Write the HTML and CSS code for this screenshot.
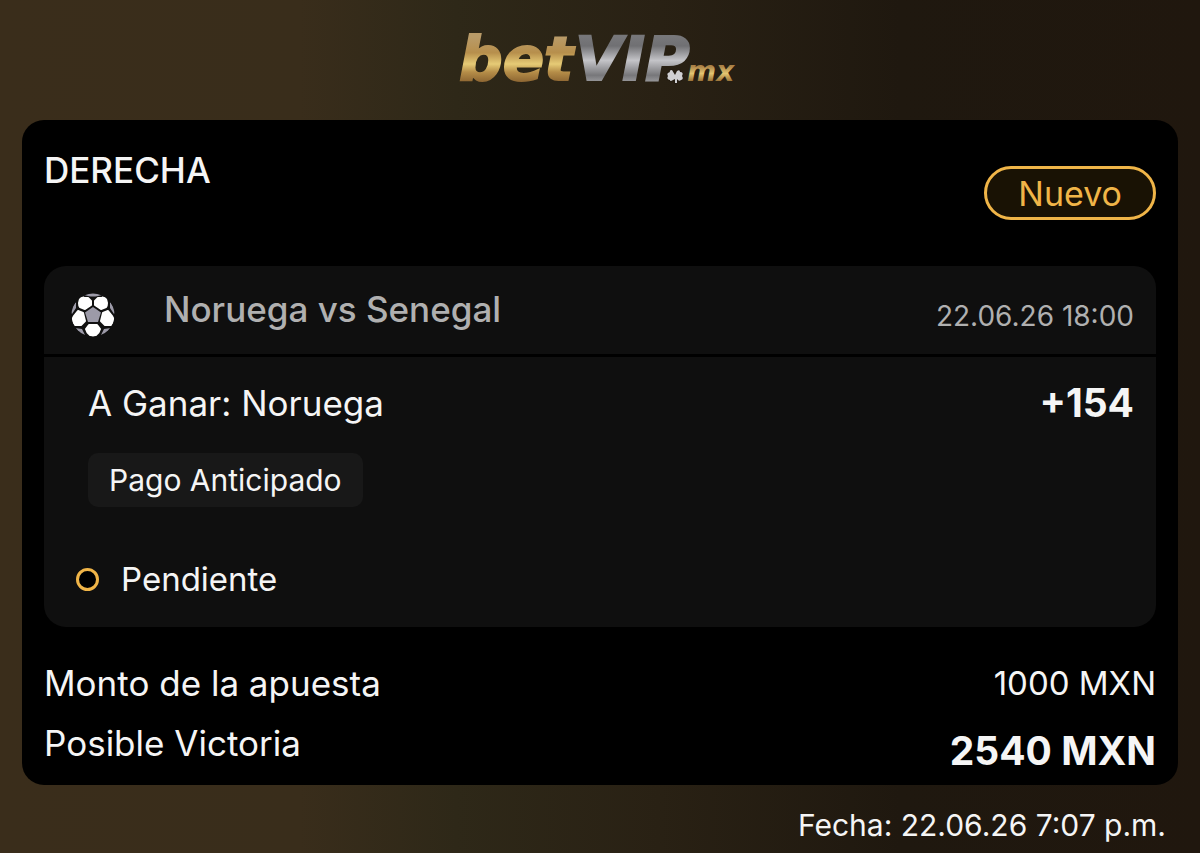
FILE: index.html
```
<!DOCTYPE html>
<html lang="es">
<head>
  <meta charset="UTF-8" />
  <meta name="viewport" content="width=device-width, initial-scale=1.0" />
  <title>betVIP.mx</title>
  <link rel="stylesheet" href="styles.css">
</head>
<body>
  <header>
    <svg class="logo" viewBox="0 0 288 100" role="img" aria-label="betVIP.mx">
      <defs>
        <linearGradient id="gold" gradientUnits="userSpaceOnUse" x1="0" y1="27" x2="0" y2="72">
          <stop offset="0" stop-color="#b99b68" />
          <stop offset="0.35" stop-color="#b78f4c" />
          <stop offset="0.6" stop-color="#e6cb76" />
          <stop offset="0.78" stop-color="#b58d48" />
          <stop offset="1" stop-color="#8d6632" />
        </linearGradient>
        <linearGradient id="silver" gradientUnits="userSpaceOnUse" x1="0" y1="27" x2="0" y2="72">
          <stop offset="0" stop-color="#77777a" />
          <stop offset="0.2" stop-color="#707073" />
          <stop offset="0.52" stop-color="#c4c4c8" />
          <stop offset="0.85" stop-color="#77777a" />
          <stop offset="1" stop-color="#99999c" />
        </linearGradient>
        <linearGradient id="goldSmall" gradientUnits="userSpaceOnUse" x1="0" y1="56" x2="0" y2="71">
          <stop offset="0" stop-color="#a98046" />
          <stop offset="0.5" stop-color="#e3c671" />
          <stop offset="1" stop-color="#9a7238" />
        </linearGradient>
      </defs>
      <text class="logo-main" x="3" y="70" fill="url(#gold)" stroke="url(#gold)">bet</text>
      <text class="logo-main" x="119" y="70" fill="url(#silver)" stroke="url(#silver)">VIP</text>
      <path d="M219 65L216 60Q213 60 214 62Q210 63 212 66Q210 69 214 70Q214 72 217 70L219 69V73H221V69Q223 72 225 70Q228 69 226 66Q228 62 224 62Q224 59 221 61Z" fill="#d0d0d3" stroke="#241c12" stroke-width="2" paint-order="stroke" />
      <text class="logo-small" x="231" y="71" fill="url(#goldSmall)">mx</text>
    </svg>
  </header>

  <main class="ticket">
    <div class="ticket-top">
      <h1>DERECHA</h1>
      <span class="badge">Nuevo</span>
    </div>

    <section class="bet">
      <div class="bet-header">
        <svg class="ball" viewBox="0 0 44 44" aria-hidden="true">
          <defs>
            <clipPath id="round"><circle cx="22" cy="22" r="21.5" /></clipPath>
          </defs>
          <g clip-path="url(#round)">
            <rect width="44" height="44" fill="#111" />
            <path d="M13 2Q22 -3 31 2L27 3Q22 4 17 3Z" fill="#9c9aa8" />
            <path d="M5 9V15L1 21L-2 18ZM39 9V15L43 21L46 18ZM4 35L11 36L14 42L11 43ZM40 35L33 36L30 42L33 43Z" fill="#9c9aa8" />
            <g fill="#fff" stroke="#fff" stroke-width="2" stroke-linejoin="round">
              <path d="M9 6Q10 4 13 4.500L17 5L20 8V12L14 16L9 14Q8 13 8 10Z" />
              <path d="M35 6Q34 4 31 4.500L27 5L24 8V12L30 16L35 14Q36 13 36 10Z" />
              <path d="M7 18L12 20L14 28L10 32L4 32L1.500 29Q1 26 3 23Z" />
              <path d="M37 18L32 20L30 28L34 32L40 32L42.500 29Q43 26 41 23Z" />
              <path d="M18 32H26L29 36Q28 40 25 42L22 43L19 42Q16 40 15 36Z" />
            </g>
            <path d="M22 14L30 19.500L27 29H17L14 19.500Z" fill="#9c9aa8" />
          </g>
        </svg>
        <h2>Noruega vs Senegal</h2>
        <time>22.06.26 18:00</time>
      </div>
      <div class="bet-body">
        <div class="pick">
          <span>A Ganar: Noruega</span>
          <strong>+154</strong>
        </div>
        <span class="tag">Pago Anticipado</span>
        <div class="status">Pendiente</div>
      </div>
    </section>

    <dl class="totals">
      <div>
        <dt>Monto de la apuesta</dt>
        <dd>1000 MXN</dd>
      </div>
      <div>
        <dt>Posible Victoria</dt>
        <dd class="win">2540 MXN</dd>
      </div>
    </dl>
  </main>

  <footer>Fecha: 22.06.26 7:07 p.m.</footer>
</body>
</html>
```

FILE: styles.css
```
* {
  box-sizing: border-box;
}

body {
  margin: 0;
  padding: 0 22px;
  min-height: 100vh;
  background: linear-gradient(90deg, #3a2d1b 0%, #392d1b 25%, #2e2818 38%, #292114 55%, #1f180f 75%, #20170e 100%);
  color: #f5f5f5;
  font-family: Inter, "Liberation Sans", sans-serif;
  font-size: 35px;
  line-height: 44px;
}

h1, h2, dl, dd {
  margin: 0;
  font-weight: 400;
}

header {
  display: flex;
  justify-content: center;
  height: 120px;
  padding-top: 10px;
}

.logo {
  width: 288px;
  height: 100px;
}

.logo-main {
  font: italic bold 61px "DejaVu Sans", sans-serif;
  stroke-width: 2px;
}

.logo-small {
  font: italic bold 28px "DejaVu Sans", sans-serif;
}

.ticket {
  padding: 28px 22px 12px;
  border-radius: 22px;
  background: #000;
}

.ticket-top {
  display: flex;
  justify-content: space-between;
  height: 118px;
}

h1 {
  font-size: 35px;
  font-weight: 500;
}

.badge {
  height: 54px;
  margin-top: 18px;
  padding: 0 31px;
  border: 3px solid #f0b548;
  border-radius: 27px;
  background: #191204;
  color: #f0b548;
  font-size: 34px;
  line-height: 50px;
}

.bet {
  border-radius: 22px;
  background: #0f0f0f;
}

.bet-header {
  display: flex;
  align-items: center;
  height: 91px;
  padding: 0 22px 0 27px;
  border-bottom: 3px solid #000;
  color: #b0b0b0;
}

.ball {
  width: 44px;
  height: 44px;
  margin-top: 10px;
}

h2 {
  flex: 1;
  margin: 0 0 2px 49px;
  font-size: 35px;
  font-weight: 500;
}

.bet-header time {
  margin-top: 12px;
  font-size: 28px;
}

.bet-body {
  padding: 24px 22px 26px 44px;
}

.pick {
  display: flex;
  justify-content: space-between;
  margin-bottom: 28px;
}

.pick strong {
  font-size: 39px;
}

.tag {
  display: inline-block;
  padding: 0 21px;
  border-radius: 10px;
  background: #181818;
  font-size: 30px;
  line-height: 54px;
  vertical-align: top;
}

.status {
  display: flex;
  align-items: center;
  gap: 22px;
  margin: 50px 0 0 -12px;
  font-size: 33px;
}

.status::before {
  content: "";
  box-sizing: border-box;
  width: 23px;
  height: 23px;
  border: 3px solid #f0b548;
  border-radius: 50%;
  background: #000;
}

.totals {
  padding-top: 34px;
}

.totals div {
  display: flex;
  justify-content: space-between;
}

.totals div + div {
  margin-top: 16px;
}

.totals dd {
  font-size: 33px;
}

.totals .win {
  padding-top: 8px;
  font-size: 39px;
  font-weight: 700;
}

footer {
  padding: 18px 12px 0 0;
  font-size: 30px;
  text-align: right;
}
```
